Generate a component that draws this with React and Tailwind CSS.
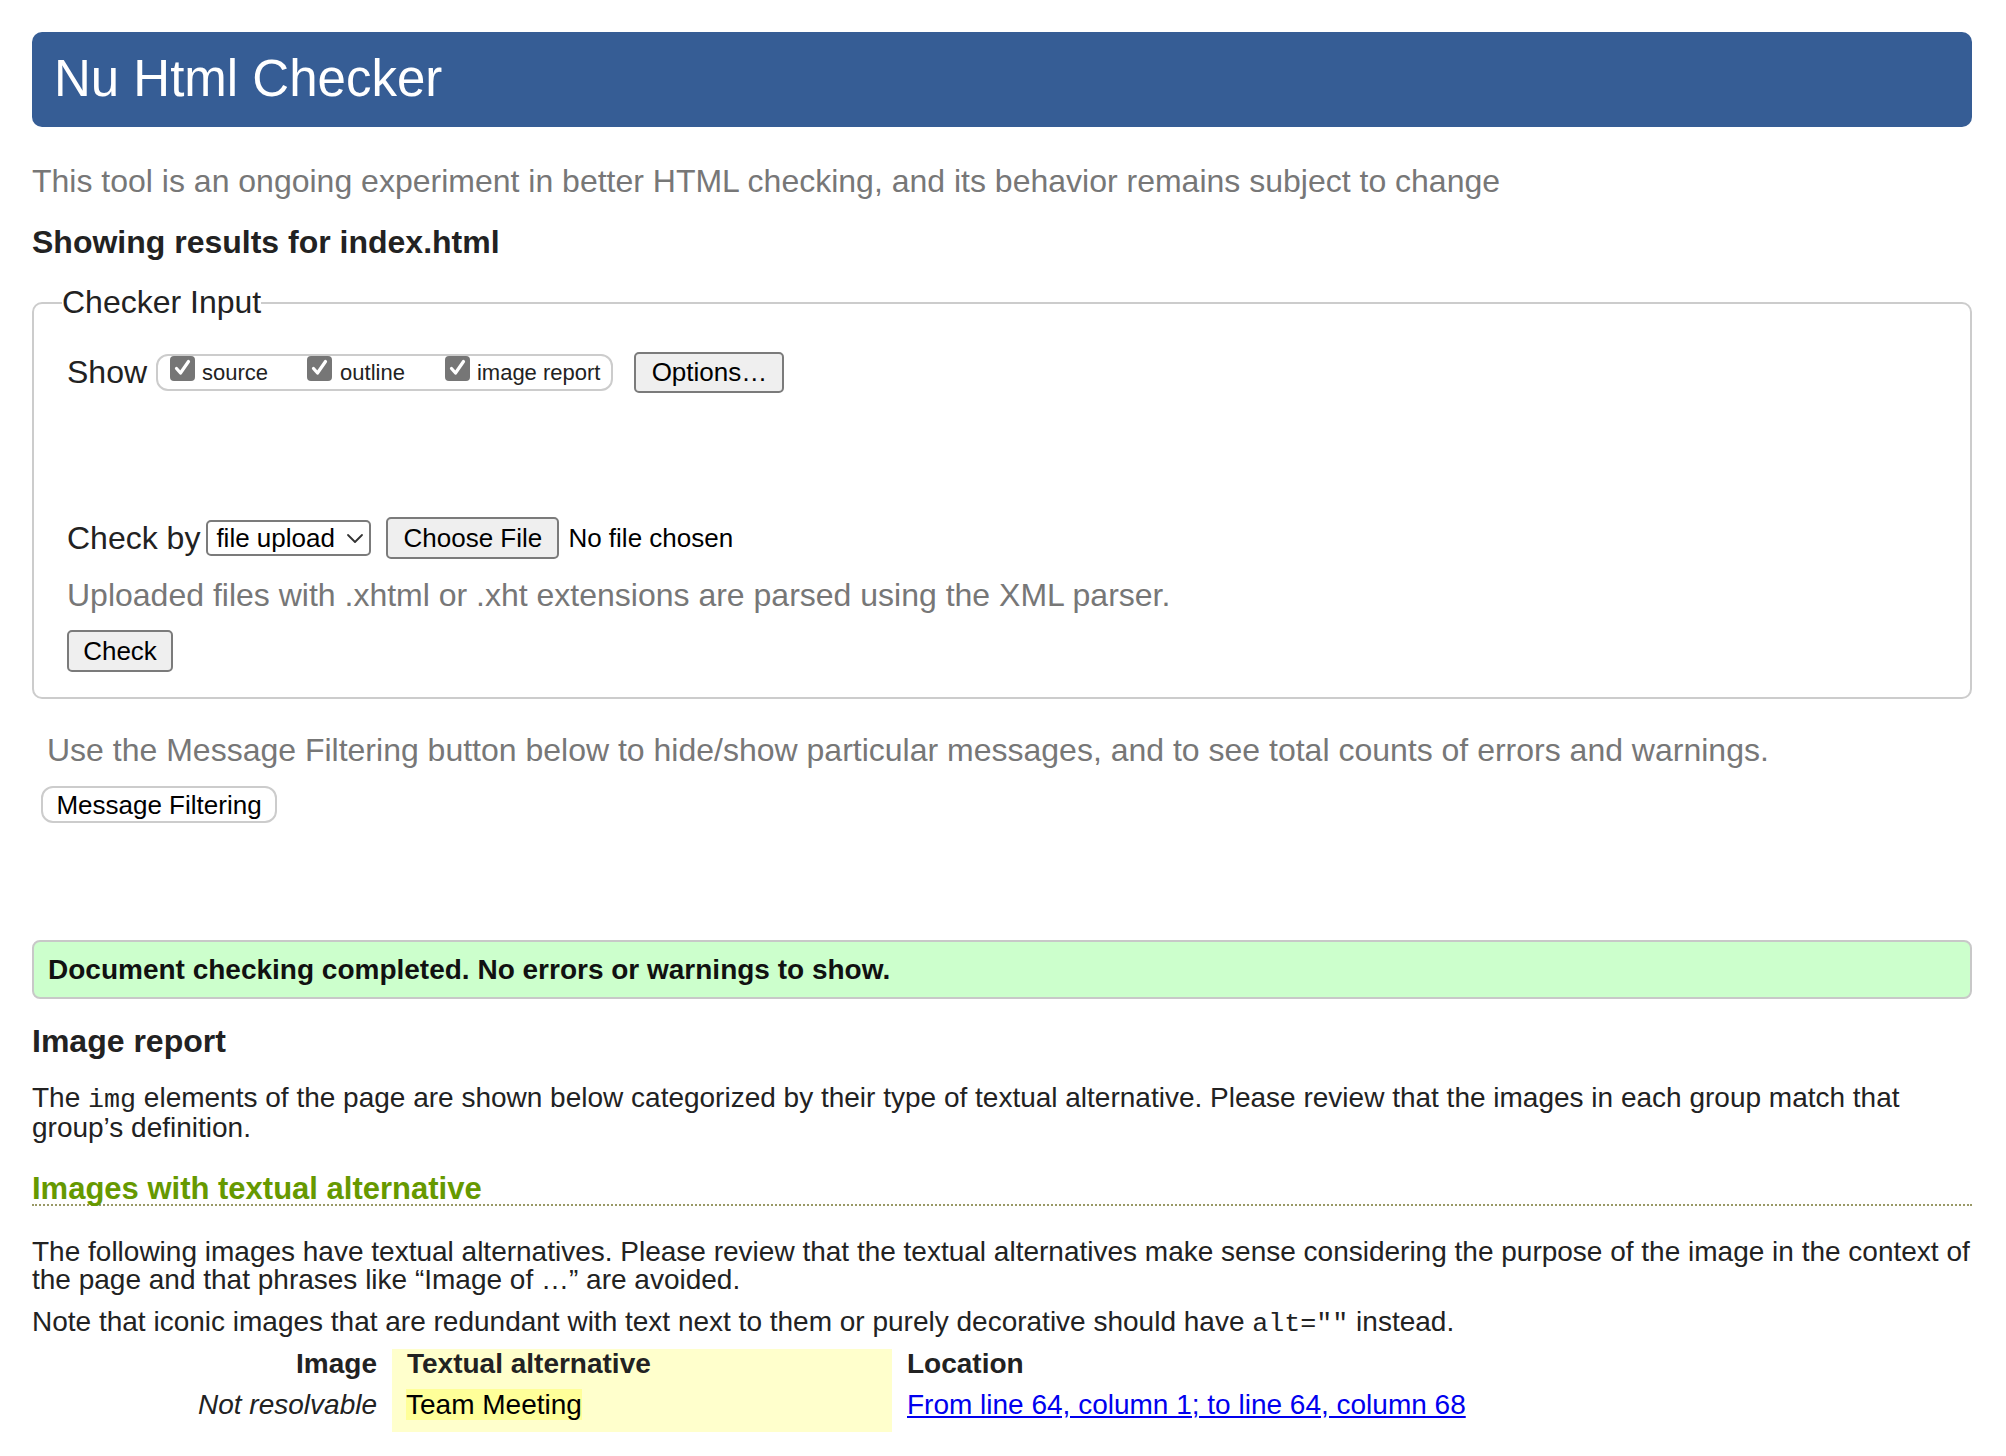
import React from "react";

function Tick() {
  return (
    <span className="flex h-[25px] w-[25px] shrink-0 items-center justify-center rounded-[4px] bg-[#767676]">
      <svg width="19" height="18" viewBox="0 0 19 18">
        <path d="M3.5 9.5 L7.5 14 L15.5 2.5" fill="none" stroke="white" strokeWidth="3.2" strokeLinecap="round" strokeLinejoin="round" />
      </svg>
    </span>
  );
}

export default function App() {
  return (
    <div className="min-h-[1456px] bg-white pl-[32px] pr-[34px] pt-[32px] font-['Liberation_Sans',Arial,sans-serif] text-[#222]">
      <h1 className="rounded-[10px] bg-[#365d95] pl-[22px] pt-[21px] pb-[23px] text-[51px] font-normal leading-[51px] text-white">
        Nu Html Checker
      </h1>
      <p className="mt-[38px] text-[32px] leading-[32px] text-[#777777]">
        This tool is an ongoing experiment in better HTML checking, and its behavior remains subject to change
      </p>
      <h2 className="mt-[29px] text-[32px] font-bold leading-[32px] text-[#222]">Showing results for index.html</h2>

      <fieldset className="mt-[29px] rounded-[10px] border-2 border-[#cccccc] pl-[28px] pr-[28px] pt-[33px] pb-[25px]">
        <legend className="text-[32px] leading-[31px] text-[#222]">Checker Input</legend>
        <div className="pl-[5px]">
          <div className="flex h-[42px] items-center">
            <span className="mr-[9px] text-[32px] leading-[32px]">Show</span>
            <div className="flex h-[37px] items-start rounded-[12px] border-2 border-[#cccccc] pl-[12px] pr-[11px]">
              <Tick />
              <span className="ml-[7px] mt-[6px] text-[22px] leading-[22px]">source</span>
              <span className="ml-[39px]">
                <Tick />
              </span>
              <span className="ml-[8px] mt-[6px] text-[22px] leading-[22px]">outline</span>
              <span className="ml-[40px]">
                <Tick />
              </span>
              <span className="ml-[7px] mt-[6px] text-[22px] leading-[22px]">image report</span>
            </div>
            <button className="ml-[21px] flex h-[41px] w-[150px] items-center justify-center rounded-[5px] border-2 border-[#7b7b7b] bg-[#efefef] text-[26px] leading-[26px] text-black">
              Options…
            </button>
          </div>

          <div className="mt-[124px] flex h-[42px] items-center">
            <span className="mr-[6px] text-[32px] leading-[32px]">Check by</span>
            <div className="flex h-[36px] w-[165px] items-center rounded-[5px] border-2 border-[#7b7b7b] pl-[8px] pr-[5px] text-[26px] leading-[26px] text-black">
              <span>file upload</span>
              <svg className="ml-auto" width="18" height="11" viewBox="0 0 18 11">
                <path d="M2 2 L9 9 L16 2" fill="none" stroke="#333" strokeWidth="1.8" strokeLinecap="round" strokeLinejoin="round" />
              </svg>
            </div>
            <button className="ml-[15px] flex h-[42px] w-[173px] items-center justify-center rounded-[5px] border-2 border-[#7b7b7b] bg-[#efefef] text-[26px] leading-[26px] text-black">
              Choose File
            </button>
            <span className="ml-[9px] text-[26px] leading-[26px] text-black">No file chosen</span>
          </div>

          <p className="mt-[20px] text-[32px] leading-[32px] text-[#777777]">
            Uploaded files with .xhtml or .xht extensions are parsed using the XML parser.
          </p>
          <button className="mt-[19px] flex h-[42px] w-[106px] items-center justify-center rounded-[5px] border-2 border-[#7b7b7b] bg-[#efefef] text-[26px] leading-[26px] text-black">
            Check
          </button>
        </div>
      </fieldset>

      <p className="ml-[15px] mt-[35px] text-[32px] leading-[32px] text-[#777777]">
        Use the Message Filtering button below to hide/show particular messages, and to see total counts of errors and warnings.
      </p>
      <button className="ml-[9px] mt-[20px] flex h-[37px] w-[236px] items-center justify-center rounded-[12px] border-2 border-[#cccccc] bg-white text-[26px] leading-[26px] text-black">
        Message Filtering
      </button>

      <div className="mt-[117px] flex h-[59px] items-center rounded-[8px] border-2 border-[#c8c8c8] bg-[#ccffcc] pl-[14px] text-[28px] font-bold leading-[28px] text-[#111]">
        Document checking completed. No errors or warnings to show.
      </div>

      <h2 className="mt-[26px] text-[32px] font-bold leading-[32px] text-[#222]">Image report</h2>
      <p className="mt-[27px] text-[28px] leading-[28px]">
        The <code className="font-['Liberation_Mono','Courier_New',monospace] text-[26.7px] leading-[28px]">img</code> elements of the page are shown below categorized by their type of textual alternative. Please review that the images in each group match that group’s definition.
      </p>

      <h3 className="mt-[31px] border-b-2 border-dotted border-[#999966] text-[31px] font-bold leading-[31px] text-[#669900]">
        Images with textual alternative
      </h3>
      <p className="mt-[32px] text-[28px] leading-[28px]">
        The following images have textual alternatives. Please review that the textual alternatives make sense considering the purpose of the image in the context of the page and that phrases like “Image of …” are avoided.
      </p>
      <p className="mt-[14px] text-[28px] leading-[28px]">
        Note that iconic images that are redundant with text next to them or purely decorative should have{" "}
        <code className="font-['Liberation_Mono','Courier_New',monospace] text-[26.7px] leading-[28px]">alt=""</code> instead.
      </p>

      <div className="mt-[11px] grid grid-cols-[360px_500px_1fr] text-[28px] leading-[28px]">
        <div className="pr-[15px] pt-[1px] pb-[6px] text-right font-bold">Image</div>
        <div className="bg-[#ffffcc] pl-[15px] pt-[1px] pb-[6px] font-bold">Textual alternative</div>
        <div className="pl-[15px] pt-[1px] pb-[6px] font-bold">Location</div>
        <div className="pr-[15px] pt-[7px] pb-[13px] text-right italic">Not resolvable</div>
        <div className="bg-[#ffffcc] pl-[14px] pt-[7px] pb-[13px]">
          <span className="bg-[#ffff99] text-black">Team Meeting</span>
        </div>
        <div className="pl-[15px] pt-[7px] pb-[13px]">
          <a href="#" className="text-[#0000ee] underline">
            From line 64, column 1; to line 64, column 68
          </a>
        </div>
      </div>
    </div>
  );
}
